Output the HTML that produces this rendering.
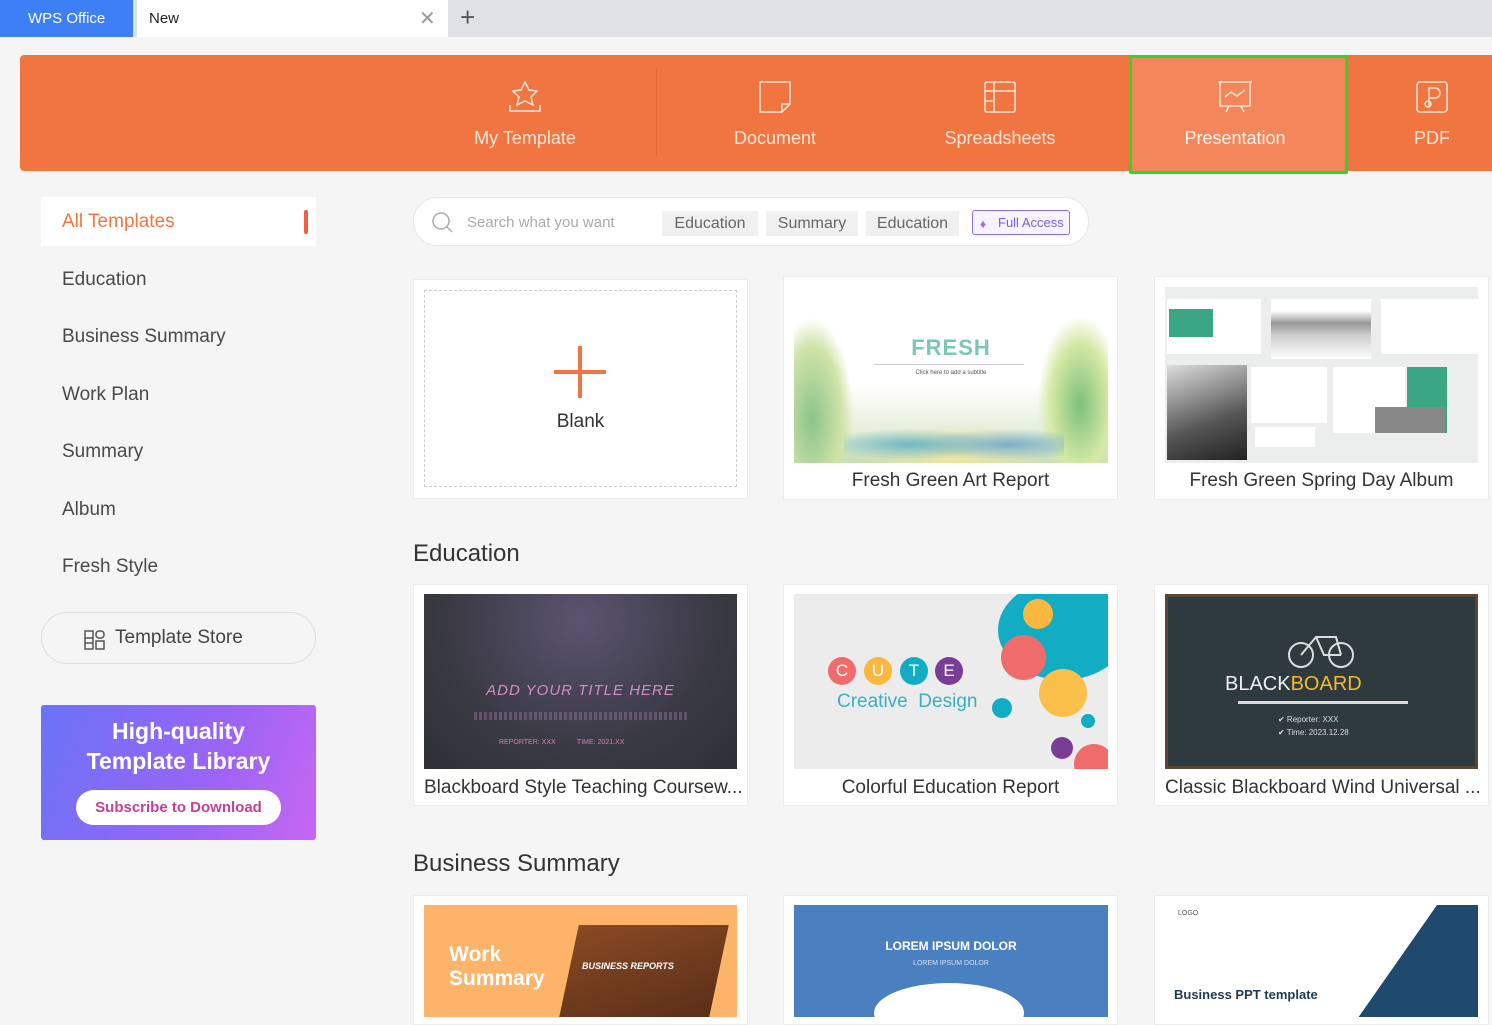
<!DOCTYPE html>
<html><head><meta charset="utf-8"><style>
*{box-sizing:border-box;margin:0;padding:0}
body{width:1492px;height:1017px;overflow:hidden;background:#f5f5f5;font-family:"Liberation Sans",sans-serif;position:relative;color:#444}
.abs{position:absolute}
.tabbar{left:0;top:0;width:1492px;height:37px;background:#dfe1e5}
.nav{left:20px;top:55px;width:1472px;height:116px;background:#f07540;border-radius:4px 0 0 4px}
.navitem{position:absolute;top:0;height:116px;text-align:center;color:#fde5d8;font-size:18px}
.navitem svg{position:absolute;top:24px;left:50%;margin-left:-18px}
.navitem span{position:absolute;top:73px;left:0;right:0}
.side{left:62px;font-size:19px;color:#4a4a4a}
.card{position:absolute;background:#fff;border:1px solid #ececec}
.thumb{position:absolute;overflow:hidden}
.cap{position:absolute;font-size:19px;color:#333;white-space:nowrap}
.h2{position:absolute;left:413px;font-size:24px;color:#333}
.chip{position:absolute;top:211px;height:25px;background:#f0f0f0;color:#666;font-size:16px;line-height:25px;text-align:center}
</style></head><body>
<div class="abs tabbar"></div>
<div class="abs" style="left:0;top:0;width:133px;height:37px;background:#3d7ff5;color:#fff;font-size:15px;line-height:38px;padding-left:28px">WPS Office</div>
<div class="abs" style="left:137px;top:0;width:311px;height:37px;background:#fff;font-size:15px;line-height:38px;padding-left:12px;color:#222">New<span style="position:absolute;left:282px;top:0;color:#999;font-size:20px">✕</span></div>
<div class="abs" style="left:460px;top:2px;font-size:26px;color:#555">+</div>

<div class="abs nav">
 <div class="abs" style="left:636px;top:14px;width:1px;height:88px;background:#e0693a"></div>
 <div class="navitem" style="left:405px;width:200px"><svg width="36" height="36" viewBox="0 0 36 36" fill="none" stroke="#fde5d8" stroke-width="1.5"><path d="M18 3l4 8 8 1-6 6 2 8-8-4-8 4 2-8-6-6 8-1z"/><path d="M3 26v6h30v-6"/></svg><span>My Template</span></div>
 <div class="navitem" style="left:655px;width:200px"><svg width="36" height="36" viewBox="0 0 36 36" fill="none" stroke="#fde5d8" stroke-width="1.5"><path d="M3 3h30v22l-8 8H3z"/><path d="M25 33v-8h8"/></svg><span>Document</span></div>
 <div class="navitem" style="left:880px;width:200px"><svg width="36" height="36" viewBox="0 0 36 36" fill="none" stroke="#fde5d8" stroke-width="1.5"><rect x="3" y="3" width="30" height="30" rx="2"/><path d="M3 12h30M12 3v30M3 22h9"/></svg><span>Spreadsheets</span></div>
 <div class="abs" style="left:1109px;top:0;width:219px;height:119px;border:3px solid #22dd22;border-radius:2px;background:#f3865a"></div>
 <div class="navitem" style="left:1115px;width:200px;color:#fff4ee"><svg width="36" height="36" viewBox="0 0 36 36" fill="none" stroke="#fde5d8" stroke-width="1.5"><path d="M1 3h34M3 3v24h30V3"/><path d="M8 18l6-5 6 4 8-6"/><path d="M12 27l-3 6M24 27l3 6"/></svg><span>Presentation</span></div>
 <div class="navitem" style="left:1332px;width:160px"><svg width="36" height="36" viewBox="0 0 36 36" fill="none" stroke="#fde5d8" stroke-width="1.5"><rect x="3" y="3" width="30" height="30" rx="3"/><path d="M15 28V9h6a5 5 0 010 10h-6"/><circle cx="14" cy="25" r="3"/></svg><span>PDF</span></div>
</div>

<div class="abs" style="left:41px;top:197px;width:275px;height:49px;background:#fff"></div>
<div class="abs" style="left:62px;top:211px;font-size:19px;color:#f07540">All Templates</div>
<div class="abs" style="left:304px;top:210px;width:4px;height:24px;background:#f0603a;border-radius:2px"></div>
<div class="abs side" style="top:269px">Education</div>
<div class="abs side" style="top:326px">Business Summary</div>
<div class="abs side" style="top:384px">Work Plan</div>
<div class="abs side" style="top:441px">Summary</div>
<div class="abs side" style="top:499px">Album</div>
<div class="abs side" style="top:556px">Fresh Style</div>
<div class="abs" style="left:41px;top:612px;width:275px;height:52px;border:1px solid #ddd;border-radius:26px"></div>
<svg class="abs" style="left:84px;top:629px" width="22" height="22" viewBox="0 0 22 22" fill="none" stroke="#555" stroke-width="1.5"><rect x="1" y="2" width="8" height="18"/><path d="M1 9h8M1 14h8"/><rect x="12" y="2" width="8" height="7" rx="3"/><rect x="12" y="12" width="8" height="8"/></svg>
<div class="abs" style="left:115px;top:627px;font-size:19px;color:#444">Template Store</div>
<div class="abs" style="left:41px;top:705px;width:275px;height:135px;border-radius:3px;background:linear-gradient(110deg,#6a73f7,#9a64f5 60%,#c767f2)"></div>
<div class="abs" style="left:41px;top:716px;width:275px;text-align:center;color:#fff;font-weight:bold;font-size:23px;line-height:30px">High-quality<br>Template Library</div>
<div class="abs" style="left:76px;top:790px;width:205px;height:35px;background:#fff;border-radius:18px;color:#c2409a;font-weight:bold;font-size:15px;line-height:35px;text-align:center">Subscribe to Download</div>

<div class="abs" style="left:413px;top:197px;width:676px;height:49px;background:#fff;border:1px solid #e6e6e6;border-radius:25px"></div>
<svg class="abs" style="left:432px;top:212px" width="22" height="22" viewBox="0 0 22 22" fill="none" stroke="#aaa" stroke-width="1.5"><circle cx="9" cy="9" r="8"/><path d="M15 15l5 5"/></svg>
<div class="abs" style="left:467px;top:214px;font-size:15px;color:#aaa">Search what you want</div>
<div class="chip" style="left:662px;width:96px">Education</div>
<div class="chip" style="left:766px;width:92px">Summary</div>
<div class="chip" style="left:866px;width:93px">Education</div>
<div class="abs" style="left:972px;top:210px;width:98px;height:25px;border:1px solid #8a6ee8;border-radius:3px;background:#f7f3ff;color:#7a5ce0;font-size:13px;line-height:23px;padding-left:25px">Full Access</div>
<div class="abs" style="left:980px;top:217px;color:#9b6cf2;font-size:12px">♦</div>

<!-- row1 -->
<div class="card" style="left:413px;top:279px;width:335px;height:220px"></div>
<div class="abs" style="left:424px;top:290px;width:313px;height:197px;border:1px dashed #ccc"></div>
<div class="abs" style="left:554px;top:370px;width:52px;height:4px;background:#f07540"></div>
<div class="abs" style="left:578px;top:346px;width:4px;height:52px;background:#f07540"></div>
<div class="cap" style="left:413px;width:335px;text-align:center;top:411px">Blank</div>

<div class="card" style="left:783px;top:276px;width:335px;height:224px"></div>
<div class="thumb" style="left:794px;top:287px;width:314px;height:176px;background:linear-gradient(180deg,#fff 0%,#fff 55%,#eef3e6 75%,#c9ddb9 100%)">
 <div class="abs" style="left:0;right:0;top:48px;text-align:center;color:#7ac7b6;font-size:22px;font-weight:bold;letter-spacing:1px">FRESH</div>
 <div class="abs" style="left:80px;width:150px;top:77px;height:1px;background:#ccc"></div>
 <div class="abs" style="left:0;right:0;top:83px;text-align:center;font-size:6px;color:#555">Click here to add a subtitle</div>
 <div class="abs" style="left:0;top:30px;width:60px;height:146px;background:radial-gradient(ellipse at 30% 70%,#8cc38a,#cfe3a8 50%,transparent 70%)"></div>
 <div class="abs" style="right:0;top:30px;width:70px;height:146px;background:radial-gradient(ellipse at 60% 60%,#7dbf7c,#d6e9a6 50%,transparent 72%)"></div>
 <div class="abs" style="left:50px;top:130px;width:220px;height:46px;background:radial-gradient(ellipse at 30% 60%,#6fb7c7,transparent 40%),radial-gradient(ellipse at 75% 60%,#7ab0cc,transparent 40%),radial-gradient(ellipse at 50% 80%,#f2e7a0,transparent 60%)"></div>
</div>
<div class="cap" style="left:783px;width:335px;text-align:center;top:470px">Fresh Green Art Report</div>

<div class="card" style="left:1154px;top:276px;width:335px;height:224px"></div>
<div class="thumb" style="left:1165px;top:287px;width:313px;height:176px;background:#eceeed">
 <div class="abs" style="left:2px;top:12px;width:94px;height:55px;background:#fff"></div><div class="abs" style="left:4px;top:22px;width:44px;height:28px;background:#3aa683"></div>
 <div class="abs" style="left:106px;top:12px;width:100px;height:60px;background:linear-gradient(#fff,#fff 20%,#999 40%,#ccc 60%,#fff)"></div>
 <div class="abs" style="left:216px;top:12px;width:97px;height:55px;background:#fff"></div>
 <div class="abs" style="left:2px;top:78px;width:80px;height:95px;background:linear-gradient(160deg,#ddd,#555 60%,#222)"></div>
 <div class="abs" style="left:86px;top:80px;width:76px;height:56px;background:#fff"></div>
 <div class="abs" style="left:168px;top:80px;width:72px;height:66px;background:#fff"></div>
 <div class="abs" style="left:242px;top:80px;width:40px;height:66px;background:#3aa683"></div>
 <div class="abs" style="left:210px;top:120px;width:70px;height:26px;background:#888"></div>
 <div class="abs" style="left:90px;top:140px;width:60px;height:20px;background:#fff"></div>
</div>
<div class="cap" style="left:1154px;width:335px;text-align:center;top:470px">Fresh Green Spring Day Album</div>

<div class="h2" style="top:540px">Education</div>

<div class="card" style="left:413px;top:584px;width:335px;height:222px"></div>
<div class="thumb" style="left:424px;top:594px;width:313px;height:175px;background:radial-gradient(ellipse at 50% 15%,#5b5470,#3a3a44 60%,#2e3036)">
 <div class="abs" style="left:0;right:0;top:88px;text-align:center;color:#d48bc5;font-size:15px;font-style:italic;letter-spacing:1px">ADD YOUR TITLE HERE</div>
 <div class="abs" style="left:50px;right:50px;top:118px;height:8px;background:repeating-linear-gradient(90deg,#8c6c96 0 3px,transparent 3px 5px);opacity:.5"></div>
 <div class="abs" style="left:75px;top:145px;color:#c085b8;font-size:7px">REPORTER: XXX &nbsp;&nbsp;&nbsp;&nbsp;&nbsp;&nbsp;&nbsp;&nbsp;&nbsp; TIME: 2021.XX</div>
</div>
<div class="cap" style="left:424px;top:777px">Blackboard Style Teaching Coursew...</div>

<div class="card" style="left:783px;top:584px;width:335px;height:222px"></div>
<div class="thumb" style="left:794px;top:594px;width:314px;height:175px;background:#ececec">
 <div class="abs" style="left:204px;top:-14px;width:130px;height:100px;border-radius:50%;background:#13adc3"></div>
 <div class="abs" style="left:229px;top:5px;width:30px;height:30px;border-radius:50%;background:#fbb840"></div>
 <div class="abs" style="left:207px;top:41px;width:45px;height:45px;border-radius:50%;background:#f06b6b"></div>
 <div class="abs" style="left:245px;top:75px;width:48px;height:48px;border-radius:50%;background:#fbc04a"></div>
 <div class="abs" style="left:198px;top:104px;width:20px;height:20px;border-radius:50%;background:#13adc3"></div>
 <div class="abs" style="left:287px;top:120px;width:14px;height:14px;border-radius:50%;background:#13adc3"></div>
 <div class="abs" style="left:257px;top:143px;width:22px;height:22px;border-radius:50%;background:#7a3d96"></div>
 <div class="abs" style="left:280px;top:150px;width:40px;height:40px;border-radius:50%;background:#f06b6b"></div>
 <div class="abs" style="left:34px;top:63px;width:28px;height:28px;border-radius:50%;background:#f06b6b;color:#fff;text-align:center;line-height:28px;font-size:17px">C</div>
 <div class="abs" style="left:70px;top:63px;width:28px;height:28px;border-radius:50%;background:#fbb840;color:#fff;text-align:center;line-height:28px;font-size:17px">U</div>
 <div class="abs" style="left:106px;top:63px;width:28px;height:28px;border-radius:50%;background:#13adc3;color:#fff;text-align:center;line-height:28px;font-size:17px">T</div>
 <div class="abs" style="left:141px;top:63px;width:28px;height:28px;border-radius:50%;background:#7a3d96;color:#fff;text-align:center;line-height:28px;font-size:17px">E</div>
 <div class="abs" style="left:43px;top:97px;color:#3ab0c0;font-size:19px">Creative&nbsp; Design</div>
</div>
<div class="cap" style="left:783px;width:335px;text-align:center;top:777px">Colorful Education Report</div>

<div class="card" style="left:1154px;top:584px;width:335px;height:222px"></div>
<div class="thumb" style="left:1165px;top:594px;width:313px;height:175px;background:#2f3a3f;border:3px solid #5a4634">
 <svg class="abs" style="left:118px;top:28px" width="70" height="45" viewBox="0 0 70 45" fill="none" stroke="#ddd" stroke-width="2"><circle cx="15" cy="30" r="12"/><circle cx="55" cy="30" r="12"/><path d="M15 30l15-18h20l5 18M30 12l8 18h17"/></svg>
 <div class="abs" style="left:57px;top:76px;font-size:20px;color:#eee">BLACK<span style="color:#f5b830">BOARD</span></div>
 <div class="abs" style="left:70px;top:104px;width:170px;height:3px;background:#ddd"></div>
 <div class="abs" style="left:110px;top:116px;color:#ddd;font-size:8px;line-height:13px">✔ Reporter: XXX<br>✔ Time: 2023.12.28</div>
</div>
<div class="cap" style="left:1165px;top:777px">Classic Blackboard Wind Universal ...</div>

<div class="h2" style="top:850px">Business Summary</div>

<div class="card" style="left:413px;top:895px;width:335px;height:130px"></div>
<div class="thumb" style="left:424px;top:905px;width:313px;height:112px;background:#fbb469">
 <div class="abs" style="left:145px;top:20px;width:150px;height:92px;background:linear-gradient(160deg,#8a4a24,#5a2f18);transform:skewX(-12deg)"></div>
 <div class="abs" style="left:25px;top:38px;color:#fff;font-weight:bold;font-size:21px;line-height:24px">Work<br>Summary</div>
 <div class="abs" style="left:158px;top:56px;color:#fff;font-size:9px;font-style:italic;font-weight:bold">BUSINESS REPORTS</div>
</div>

<div class="card" style="left:783px;top:895px;width:335px;height:130px"></div>
<div class="thumb" style="left:794px;top:905px;width:314px;height:112px;background:#4a7fc0">
 <div class="abs" style="left:0;right:0;top:34px;text-align:center;color:#fff;font-size:12px;font-weight:bold">LOREM IPSUM DOLOR</div>
 <div class="abs" style="left:0;right:0;top:55px;text-align:center;color:#cfe0f5;font-size:7px">LOREM IPSUM DOLOR</div>
 <div class="abs" style="left:80px;top:78px;width:150px;height:60px;border-radius:50%;background:#fff"></div>
</div>

<div class="card" style="left:1154px;top:895px;width:335px;height:130px"></div>
<div class="thumb" style="left:1165px;top:905px;width:313px;height:112px;background:#fff">
 <div class="abs" style="left:230px;top:-20px;width:140px;height:160px;background:#1f4a6e;transform:skewX(-35deg)"></div>
 <div class="abs" style="left:13px;top:5px;font-size:7px;color:#555">LOGO</div>
 <div class="abs" style="left:9px;top:82px;font-size:13px;font-weight:bold;color:#1f3a55">Business PPT template</div>
</div>
</body></html>
